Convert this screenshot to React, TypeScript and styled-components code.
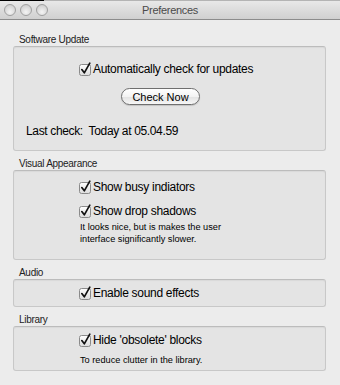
import React from 'react';
import styled, { createGlobalStyle } from 'styled-components';

const GlobalStyle = createGlobalStyle`
  html, body {
    margin: 0;
    padding: 0;
    background: #ececec;
  }
  body {
    font-family: 'Liberation Sans', Arial, sans-serif;
    color: #000;
  }
`;

const Window = styled.div`
  width: 340px;
  height: 385px;
  background: #ececec;
  overflow: hidden;
`;

const TitleBar = styled.div`
  height: 20px;
  box-sizing: border-box;
  display: flex;
  align-items: center;
  position: relative;
  background: linear-gradient(#e8e8e8, #d0d0d0);
  border-top: 1px solid #b4b4b4;
  border-bottom: 1px solid #8c8c8c;

  &::before {
    content: '';
    position: absolute;
    top: -1px;
    left: 0;
    width: 44px;
    height: 1px;
    background: #000;
  }
`;

const Lights = styled.div`
  display: flex;
  gap: 4px;
  padding-left: 4px;
`;

const Light = styled.span`
  width: 10px;
  height: 10px;
  border-radius: 50%;
  border: 1px solid #a0a0a0;
  background: radial-gradient(circle at 50% 70%, #f4f4f4, #c6c6c6);
`;

const Title = styled.div`
  position: absolute;
  left: 0;
  right: 0;
  text-align: center;
  font-size: 11px;
  letter-spacing: -0.3px;
  color: #4a4a4a;
  pointer-events: none;
`;

const Content = styled.div`
  padding: 14px 14px 0 13px;
  display: flex;
  flex-direction: column;
`;

const Section = styled.div`
  display: flex;
  flex-direction: column;
  margin-bottom: 7px;
`;

const SectionLabel = styled.div`
  font-size: 10px;
  line-height: 12px;
  letter-spacing: -0.3px;
  color: #222;
  padding-left: 6px;
`;

const Box = styled.div<{ $h: number; $pt: number }>`
  height: ${(p) => p.$h}px;
  box-sizing: border-box;
  padding-top: ${(p) => p.$pt}px;
  background: #e4e4e4;
  border: 1px solid #c8c8c8;
  border-top-color: #bcbcbc;
  border-radius: 3px;
  box-shadow: inset 0 1px 1px rgba(0, 0, 0, 0.05);
  display: flex;
  flex-direction: column;
`;

const CheckRow = styled.label<{ $mb?: number }>`
  display: flex;
  align-items: center;
  gap: 1px;
  padding-left: 64px;
  font-size: 12px;
  line-height: 14px;
  letter-spacing: -0.3px;
  margin-bottom: ${(p) => p.$mb ?? 0}px;
`;

const Note = styled.div`
  padding-left: 66px;
  font-size: 9.2px;
  line-height: 12px;
  color: #000;
`;

const ButtonRow = styled.div`
  display: flex;
  padding-left: 107px;
  margin-top: 12px;
`;

const PushButton = styled.button`
  width: 79px;
  height: 17px;
  padding: 0;
  border-radius: 9px;
  border: 1px solid #6f6f6f;
  background: linear-gradient(#ffffff, #f3f3f3 50%, #e2e2e2 51%, #f6f6f6);
  box-shadow: 0 1px 1px rgba(0, 0, 0, 0.15);
  font-family: inherit;
  font-size: 11px;
  color: #000;
`;

const LastCheck = styled.div`
  padding-left: 12px;
  margin-top: 19px;
  font-size: 12px;
  line-height: 14px;
  letter-spacing: -0.35px;
`;

const CheckBox = () => (
  <svg width="14" height="14" viewBox="0 0 14 14">
    <defs>
      <linearGradient id="cbg" x1="0" y1="0" x2="0" y2="1">
        <stop offset="0" stopColor="#ffffff" />
        <stop offset="1" stopColor="#dcdcdc" />
      </linearGradient>
    </defs>
    <rect x="1.5" y="2.5" width="11" height="11" rx="2" fill="url(#cbg)" stroke="#8a8a8a" />
    <path d="M3.8 7.6 L6.3 10.8 L11.8 1.2" fill="none" stroke="#111" strokeWidth="1.7" strokeLinecap="round" strokeLinejoin="round" />
  </svg>
);

const Check = ({ text, mb }: { text: string; mb?: number }) => (
  <CheckRow $mb={mb}>
    <CheckBox />
    <span>{text}</span>
  </CheckRow>
);

export default function App() {
  return (
    <Window>
      <GlobalStyle />
      <TitleBar>
        <Lights>
          <Light />
          <Light />
          <Light />
        </Lights>
        <Title>Preferences</Title>
      </TitleBar>
      <Content>
        <Section>
          <SectionLabel>Software Update</SectionLabel>
          <Box $h={105} $pt={15}>
            <Check text="Automatically check for updates" />
            <ButtonRow>
              <PushButton>Check Now</PushButton>
            </ButtonRow>
            <LastCheck>Last check:&nbsp; Today at 05.04.59</LastCheck>
          </Box>
        </Section>
        <Section>
          <SectionLabel>Visual Appearance</SectionLabel>
          <Box $h={90} $pt={9}>
            <Check text="Show busy indiators" mb={10} />
            <Check text="Show drop shadows" mb={3} />
            <Note>
              It looks nice, but is makes the user
              <br />
              interface significantly slower.
            </Note>
          </Box>
        </Section>
        <Section>
          <SectionLabel>Audio</SectionLabel>
          <Box $h={28} $pt={6}>
            <Check text="Enable sound effects" />
          </Box>
        </Section>
        <Section>
          <SectionLabel>Library</SectionLabel>
          <Box $h={45} $pt={6}>
            <Check text="Hide 'obsolete' blocks" mb={7} />
            <Note>To reduce clutter in the library.</Note>
          </Box>
        </Section>
      </Content>
    </Window>
  );
}
